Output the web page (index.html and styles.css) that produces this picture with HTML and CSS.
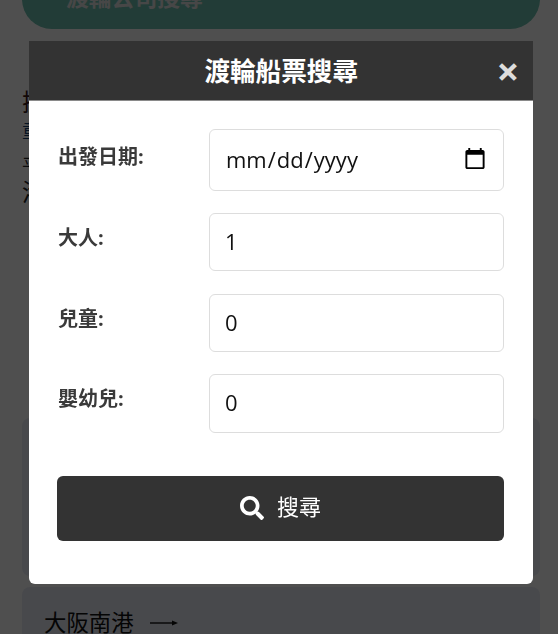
FILE: index.html
```html
<!DOCTYPE html>
<html lang="zh-Hant">
<head>
<meta charset="utf-8">
<title>渡輪船票搜尋</title>
<link rel="stylesheet" href="styles.css">
</head>
<body>
<main class="page">
  <div class="company-bar">
    <span>渡輪公司搜尋</span>
    <svg class="chevron" viewBox="0 0 16 10" width="16" height="10"><path d="M1 1l7 7 7-7" fill="none" stroke="#e4e4e4" stroke-width="2.5"/></svg>
  </div>
  <div class="intro">
    <p class="intro-line intro-dark">搜尋渡輪船票</p>
    <p class="intro-line intro-small intro-blue">重要通知</p>
    <p class="intro-line intro-small intro-gap">平日航班</p>
    <p class="intro-line intro-last">港口資訊</p>
  </div>
  <section class="route-card route-blank"></section>
  <section class="route-card">
    <span>大阪南港</span>
    <svg class="arrow" viewBox="0 0 28 10" width="28" height="10"><path d="M0 5h24" stroke="#111" stroke-width="1.4"/><path d="M22 2.5l6 2.5-6 2.5z" fill="#111"/></svg>
  </section>
</main>

<div class="overlay">
  <div class="modal">
    <header class="modal-head">
      <h1>渡輪船票搜尋</h1>
      <button class="close" type="button">×</button>
    </header>
    <form class="modal-body">
      <div class="field field-date">
        <label for="d">出發日期:</label>
        <input id="d" class="control" type="date">
      </div>
      <div class="field">
        <label for="a">大人:</label>
        <input id="a" class="control" type="number" value="1">
      </div>
      <div class="field">
        <label for="c">兒童:</label>
        <input id="c" class="control" type="number" value="0">
      </div>
      <div class="field">
        <label for="i">嬰幼兒:</label>
        <input id="i" class="control" type="number" value="0">
      </div>
      <button class="search" type="button">
        <svg viewBox="0 0 512 512" width="24" height="24"><path fill="#fff" d="M505 442.7L405.3 343c-4.5-4.5-10.6-7-17-7H372c27.6-35.3 44-79.7 44-128C416 93.1 322.9 0 208 0S0 93.1 0 208s93.1 208 208 208c48.3 0 92.7-16.4 128-44v16.3c0 6.4 2.5 12.5 7 17l99.7 99.7c9.4 9.4 24.6 9.4 33.9 0l28.3-28.3c9.4-9.4 9.4-24.6.1-34zM208 336c-70.7 0-128-57.2-128-128 0-70.7 57.2-128 128-128 70.7 0 128 57.2 128 128 0 70.7-57.2 128-128 128z"/></svg>
        <span class="search-label">搜尋</span>
      </button>
    </form>
  </div>
</div>
</body>
</html>
```
FILE: styles.css
```css
* { box-sizing: border-box; }
html, body { margin: 0; height: 100%; overflow: hidden; }
body {
  background: #fff;
  font-family: "Open Sans", "Noto Sans CJK TC", sans-serif;
  color: #212529;
}
.page { padding: 0 18px 0 22px; height: 634px; overflow: hidden; }
.company-bar {
  height: 59px;
  margin-top: -30px;
  padding: 0 44px 6px 44px;
  background: #6ec1b0;
  border-radius: 0 0 30px 30px;
  display: flex;
  align-items: center;
  justify-content: space-between;
  color: #e4e4e4;
  font-size: 22.8px;
  font-weight: 700;
}
.chevron { margin-top: -8px; }
.intro { margin-top: 56px; height: 333px; }
.intro-line { margin: 0; font-size: 24px; line-height: 34px; white-space: nowrap; color: #212529; }
.intro-small { font-size: 18px; line-height: 24px; }
.intro-gap { margin-top: 10px; }
.intro-last { margin-top: -2px; }
.intro-dark { color: #3a1c1c; }
.intro-blue { color: #123a6a; }
.route-card {
  background: #e9ebf5;
  border-radius: 8px;
  padding: 20px 22px;
  font-size: 22.4px;
  line-height: 32px;
  color: #111;
  display: flex;
  align-items: center;
  gap: 16px;
  margin-bottom: 11px;
}
.route-blank { height: 158px; }
.overlay {
  position: fixed;
  inset: 0;
  background: rgba(0, 0, 0, .69);
  padding: 40.7px 24.6px 0 29px;
}
.modal { background: #fff; border-radius: 0 0 6px 6px; height: 543.6px; overflow: hidden; }
.modal-head {
  height: 60px;
  padding-top: 3px;
  background: #333;
  position: relative;
  display: flex;
  align-items: center;
  justify-content: center;
  border-bottom: 1px solid #8a8a8a;
}
.modal-head h1 { margin: 0; color: #fff; font-size: 25.6px; font-weight: 700; line-height: 1; }
.close {
  position: absolute;
  right: 14px;
  top: 7px;
  padding: 0;
  border: 0;
  background: none;
  color: #ddd;
  font: 700 40px/46px "Open Sans", sans-serif;
}
.modal-body { padding: 28.3px 29px 0 28px; }
.field {
  display: grid;
  grid-template-columns: 152px 295px;
  height: 58.4px;
  margin-bottom: 22.2px;
}
.field-date { height: 62px; margin-bottom: 22px; }
.field label { font-size: 20px; font-weight: 700; color: #3a3a3a; line-height: 28px; padding: 11px 0 0 1px; }
.field-date label { padding-top: 14px; }
.control {
  width: 100%;
  height: 100%;
  padding: 0 16px 2px 15px;
  border: 1px solid #ddd;
  border-radius: 6px;
  background: #fff;
  color: #111;
  font: 400 22px "Open Sans", sans-serif;
}
.control::-webkit-calendar-picker-indicator { margin: 0; padding: 0; width: 24px; height: 24px; }
.search {
  width: 447px;
  height: 65px;
  margin-top: 43px;
  background: #333;
  border: 0;
  border-radius: 6px;
  color: #fff;
  display: flex;
  align-items: center;
  justify-content: center;
  gap: 13px;
  font: 400 22px "Open Sans", "Noto Sans CJK TC", sans-serif;
}
.search-label { margin-bottom: 6px; }
```
